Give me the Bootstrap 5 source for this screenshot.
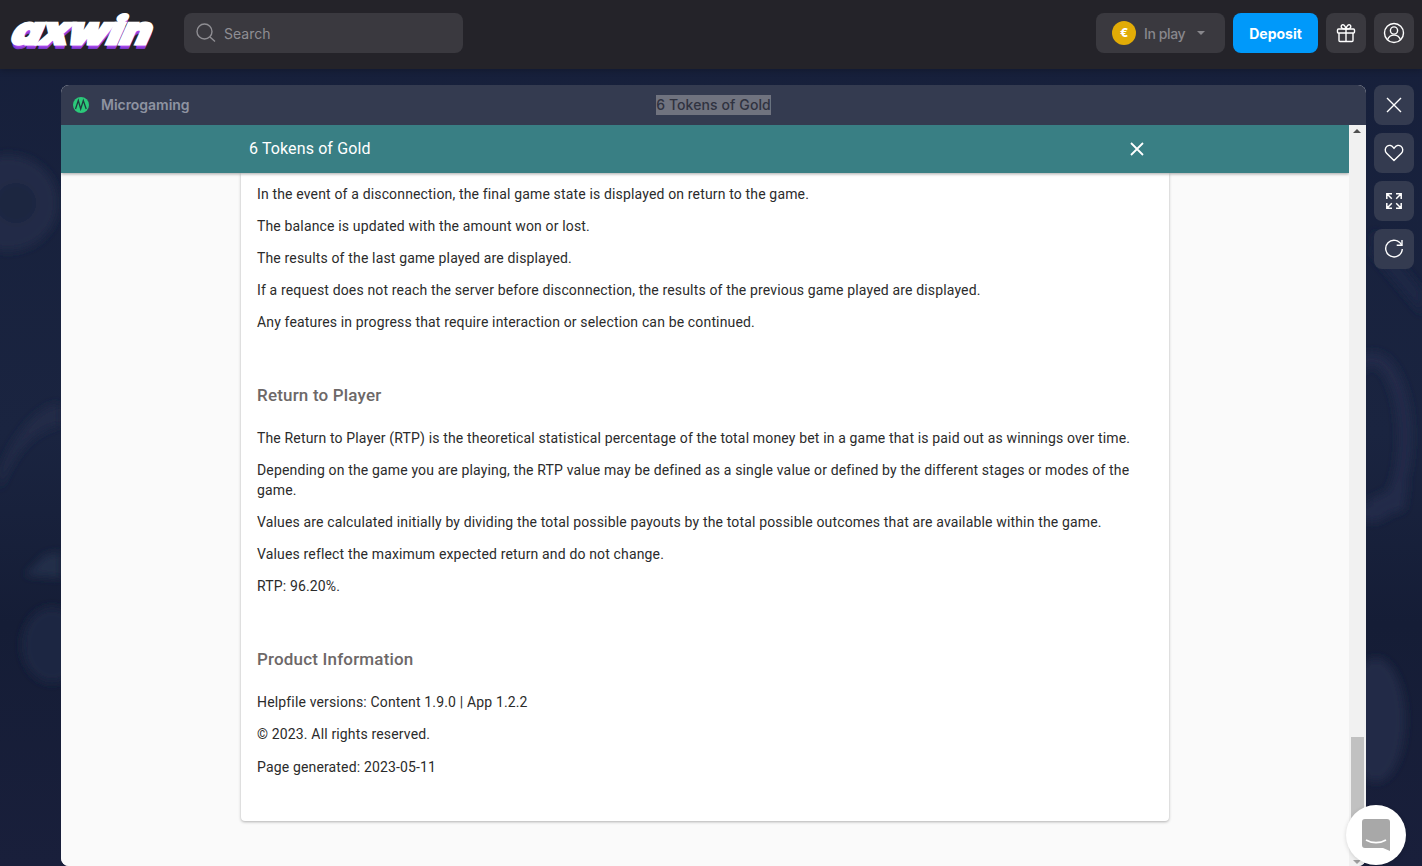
<!DOCTYPE html>
<html lang="en">
<head>
  <meta charset="UTF-8" />
  <meta name="viewport" content="width=device-width, initial-scale=1" />
  <title>6 Tokens of Gold</title>
  <link href="https://cdn.jsdelivr.net/npm/bootstrap@5.3.0/dist/css/bootstrap.min.css" rel="stylesheet" />
  <style>
    html, body { height: 100%; overflow: hidden; }
    body {
      background: #18213c;
      font-family: Inter, "Liberation Sans", sans-serif;
      position: relative;
    }
    .bg-art { position: absolute; left: 0; top: 0; width: 100%; height: 100%; }
    .page { position: relative; height: 100vh; }

    /* top bar */
    .top-bar { height: 69px; background: #242329; padding: 13px 8px 0 13px; flex: none; box-shadow: 0 2px 6px rgb(0 0 0 / .2); }
    .brand-word {
      width: 171px;
      height: 40px;
      font: italic 900 38px/35px Inter, sans-serif;
      letter-spacing: -.3px;
      color: #fff;
      -webkit-text-stroke: 2.8px #fff;
      text-shadow: 0 1px 0 #b14ff0, 0 2px 0 #ab4aec, 1px 3px 0 #a544e8, 1px 4px 0 #8a3fd6, 1px 5px 0 #7d39c8;
      transform: scaleX(1.2) skewX(-12deg);
      transform-origin: left center;
    }
    .search-box {
      width: 279px; height: 40px; border-radius: 8px; background: #3a393f;
      color: #8f8e93; font-size: 14px; padding-left: 11px; gap: 7px;
    }
    .dark-tile { background: #3a393f; border-radius: 8px; height: 40px; color: #fff; }
    .square-tile { width: 40px; }
    .balance-tile { width: 129px; padding-left: 16px; color: #88878c; font-size: 14px; font-weight: 500; letter-spacing: -.4px; }
    .euro-dot {
      width: 24px; height: 24px; border-radius: 50%; background: #e2ac06; color: #fff;
      font-size: 12px; font-weight: 800; margin-right: 8px;
    }
    .caret-mark { width: 0; height: 0; border: 4px solid transparent; border-top-color: #88878c; border-bottom: 0; margin-left: 12px; }
    .deposit-btn {
      width: 85px; height: 40px; border-radius: 8px; background: #0099fa; color: #fff;
      font-size: 14px; font-weight: 700; padding: 0; border: 0;
    }

    /* game area */
    .game-area { padding: 16px 8px 0 61px; gap: 8px; min-height: 0; }
    .game-frame { width: 1305px; border-radius: 8px; overflow: hidden; background: #fafafa; }
    .frame-head {
      height: 40px; flex: none; background: #343b50;
      display: grid; grid-template-columns: 1fr auto 1fr; align-items: center;
      font-size: 14px; font-weight: 600;
    }
    .provider-cell { padding-left: 12px; }
    .provider-name { color: #8e93a1; margin-left: 12px; letter-spacing: -.03px; line-height: 18px; margin-bottom: 1px; }
    .frame-title { background: #70737f; color: #2f3240; line-height: 20px; font-weight: 500; letter-spacing: .1px; }
    .frame-body { min-height: 0; }
    .help-pane { min-width: 0; background: #fafafa; position: relative; font-family: Roboto, sans-serif; }
    .help-bar {
      height: 48px; background: #397f84; color: #fff; flex: none;
      font-size: 16px; font-weight: 400; box-shadow: 0 1px 3px rgb(0 0 0 / .35);
      padding: 0 205px 0 188px; position: relative; letter-spacing: .12px;
    }
    .help-card {
      width: 928px; margin-left: 180px; padding: 11px 16px 44px; background: #fff;
      border-radius: 0 0 4px 4px; box-shadow: 0 1px 3px rgb(0 0 0 / .3);
      color: #2b2b2b; font-size: 14px; line-height: 20px; letter-spacing: .155px;
    }
    .help-card p { margin: 0 0 12px; }
    .help-card h2 { font-size: 17px; line-height: 24px; font-weight: 500; color: #6d6868; margin: 51px 0 21px; letter-spacing: .18px; }
    .help-card p.last-line { margin: 13px 0 0; }
    .scroll-rail { width: 17px; flex: none; background: #f1f1f1; position: relative; }
    .scroll-thumb { position: absolute; left: 2px; right: 2px; top: 612px; height: 110px; background: #c1c1c1; }
    .arrow-up, .arrow-down { position: absolute; left: 4px; width: 0; height: 0; border: 4px solid transparent; }
    .arrow-up { top: 4px; border-bottom-color: #505050; border-top: 0; }
    .arrow-down { bottom: 2px; border-top-color: #a0a0a0; border-bottom: 0; }

    .side-tools { gap: 8px; }
    .side-btn { width: 40px; height: 40px; border-radius: 8px; background: #343b50; color: #fff; }

    .chat-bubble {
      position: absolute; left: 1346px; top: 805px; width: 60px; height: 60px;
      border-radius: 50%; background: #fff; box-shadow: 0 1px 4px rgb(0 0 0 / .15);
    }
  </style>
</head>
<body>

<!-- faint chip shapes behind the game -->
<svg class="bg-art" viewBox="0 0 1422 866" aria-hidden="true">
  <defs>
    <linearGradient id="bgFade" x1="0" y1="0" x2="0" y2="1">
      <stop offset="0" stop-color="#161f3a"/>
      <stop offset=".5" stop-color="#1a2440"/>
      <stop offset=".72" stop-color="#151d36"/>
      <stop offset="1" stop-color="#191f3b"/>
    </linearGradient>
    <filter id="softEdge"><feGaussianBlur stdDeviation="4"/></filter>
  </defs>
  <rect width="1422" height="866" fill="url(#bgFade)"/>
  <g filter="url(#softEdge)">
    <ellipse cx="8" cy="203" rx="50" ry="48" fill="#232c47"/>
    <circle cx="16" cy="203" r="20" fill="#1d2640"/>
    <path d="M0 470 C20 420 50 400 61 405 L61 425 C35 430 15 450 0 490Z" fill="#212b47"/>
    <path d="M25 575 L45 555 L61 552 L61 578Z" fill="#242e4a"/>
    <ellipse cx="52" cy="645" rx="30" ry="38" fill="#1e2843"/>
    <ellipse cx="1372" cy="437" rx="33" ry="78" fill="none" stroke="#222c49" stroke-width="14"/>
    <path d="M1368 500 L1408 482 L1404 510 L1368 520Z" fill="#222c49"/>
    <path d="M1374 230 L1422 290 L1422 315 L1372 255Z" fill="#1d2744"/>
    <ellipse cx="1376" cy="720" rx="29" ry="62" fill="#202a47"/>
  </g>
</svg>

<div class="page d-flex flex-column">
  <header class="top-bar d-flex">
    <div class="brand-word">axwin</div>
    <div class="search-box d-flex align-items-center">
      <svg width="22" height="22" viewBox="0 0 22 22" fill="none" stroke="#8f8e93" stroke-width="1.4"><circle cx="9.5" cy="9.5" r="7.5"/><path d="M15 15l5 4.5"/></svg>
      <span>Search</span>
    </div>
    <div class="d-flex ms-auto gap-2">
      <div class="dark-tile balance-tile d-flex align-items-center">
        <span class="euro-dot d-flex align-items-center justify-content-center">€</span>
        <span>In play</span>
        <span class="caret-mark"></span>
      </div>
      <button class="btn deposit-btn">Deposit</button>
      <div class="dark-tile square-tile d-flex align-items-center justify-content-center">
        <svg width="20" height="20" viewBox="0 0 20 20" fill="none" stroke="#fff" stroke-width="1.4" stroke-linejoin="round"><rect x="1.5" y="6" width="17" height="4" rx="1"/><path d="M3 10v7.5a1 1 0 0 0 1 1h12a1 1 0 0 0 1-1V10M10 6v12.5M10 6C8 6 5.2 5.5 5.2 3.4 5.2 1.800 7 1.200 8.200 2.200 9.300 3.100 10 6 10 6ZM10 6c2 0 4.800-.5 4.800-2.600 0-1.600-1.800-2.200-3-1.200C10.700 3.100 10 6 10 6Z"/></svg>
      </div>
      <div class="dark-tile square-tile d-flex align-items-center justify-content-center">
        <svg width="22" height="22" viewBox="0 0 22 22" fill="none" stroke="#fff" stroke-width="1.4"><circle cx="11" cy="11" r="9.500"/><circle cx="11" cy="8.500" r="3.600"/><path d="M4.500 17.800c1-3 3.500-4.700 6.500-4.700s5.500 1.700 6.500 4.700"/></svg>
      </div>
    </div>
  </header>

  <main class="game-area d-flex flex-grow-1">
    <section class="game-frame d-flex flex-column">
      <div class="frame-head">
        <div class="provider-cell d-flex align-items-center">
          <svg width="16" height="16" viewBox="0 0 16 16"><circle cx="8" cy="8" r="8" fill="#2bc97a"/><path d="M2.500 12 5.300 3.500l2.400 8.500 2.600-8.500 2.900 8.500" fill="none" stroke="#1f3a3e" stroke-width="1.300"/></svg>
          <span class="provider-name">Microgaming</span>
        </div>
        <div><span class="frame-title d-block">6 Tokens of Gold</span></div>
        <div></div>
      </div>
      <div class="frame-body d-flex flex-grow-1">
        <div class="help-pane flex-grow-1 overflow-hidden">
          <div class="help-bar d-flex align-items-center justify-content-between">
            <span>6 Tokens of Gold</span>
            <svg width="14" height="14" viewBox="0 0 14 14" stroke="#fff" stroke-width="1.800"><path d="M1 1l12 12M13 1 1 13"/></svg>
          </div>
          <article class="help-card">
            <p>In the event of a disconnection, the final game state is displayed on return to the game.</p>
            <p>The balance is updated with the amount won or lost.</p>
            <p>The results of the last game played are displayed.</p>
            <p>If a request does not reach the server before disconnection, the results of the previous game played are displayed.</p>
            <p>Any features in progress that require interaction or selection can be continued.</p>
            <h2>Return to Player</h2>
            <p>The Return to Player (RTP) is the theoretical statistical percentage of the total money bet in a game that is paid out as winnings over time.</p>
            <p>Depending on the game you are playing, the RTP value may be defined as a single value or defined by the different stages or modes of the game.</p>
            <p>Values are calculated initially by dividing the total possible payouts by the total possible outcomes that are available within the game.</p>
            <p>Values reflect the maximum expected return and do not change.</p>
            <p>RTP: 96.20%.</p>
            <h2>Product Information</h2>
            <p>Helpfile versions: Content 1.9.0 | App 1.2.2</p>
            <p class="mb-0">© 2023. All rights reserved.</p>
            <p class="last-line">Page generated: 2023-05-11</p>
          </article>
        </div>
        <div class="scroll-rail">
          <span class="arrow-up"></span>
          <span class="scroll-thumb"></span>
          <span class="arrow-down"></span>
        </div>
      </div>
    </section>

    <aside class="side-tools d-flex flex-column">
      <div class="side-btn d-flex align-items-center justify-content-center">
        <svg width="16" height="16" viewBox="0 0 16 16" stroke="#fff" stroke-width="1.400"><path d="M1 1l14 14M15 1 1 15"/></svg>
      </div>
      <div class="side-btn d-flex align-items-center justify-content-center">
        <svg width="20" height="18" viewBox="0 0 20 18" fill="none" stroke="#fff" stroke-width="1.400" stroke-linejoin="round"><path d="M10 16.500 2.600 9.200C.6 7.200.9 3.900 3 2.300c2-1.400 4.800-.9 6.200 1L10 4.400l.8-1.100c1.400-1.900 4.200-2.400 6.200-1 2.100 1.600 2.400 4.900.4 6.900Z"/></svg>
      </div>
      <div class="side-btn d-flex align-items-center justify-content-center">
        <svg width="16" height="16" viewBox="0 0 16 16" fill="none" stroke="#fff" stroke-width="1.500"><path d="M.8 6V.8H6M.8.8l5 5M10 .8h5.200V6M15.200.8l-5 5M.8 10v5.200H6M.8 15.200l5-5M15.200 10v5.200H10M15.200 15.200l-5-5"/></svg>
      </div>
      <div class="side-btn d-flex align-items-center justify-content-center">
        <svg width="20" height="20" viewBox="0 0 20 20" fill="none" stroke="#fff" stroke-width="1.400"><path d="M17.500 6A8.300 8.300 0 1 0 18.300 10"/><path d="M18 1v5.300h-5.300"/></svg>
      </div>
    </aside>
  </main>
</div>

<div class="chat-bubble d-flex align-items-center justify-content-center">
  <svg width="28" height="32" viewBox="0 0 28 32"><path d="M3 0h22a3 3 0 0 1 3 3v29l-7-3H3a3 3 0 0 1-3-3V3a3 3 0 0 1 3-3Z" fill="#a8a8a8"/><path d="M4 21c6 3.500 14 3.500 20 0" fill="none" stroke="#fff" stroke-width="1.600"/></svg>
</div>

<script src="https://cdn.jsdelivr.net/npm/bootstrap@5.3.0/dist/js/bootstrap.bundle.min.js"></script>
</body>
</html>
